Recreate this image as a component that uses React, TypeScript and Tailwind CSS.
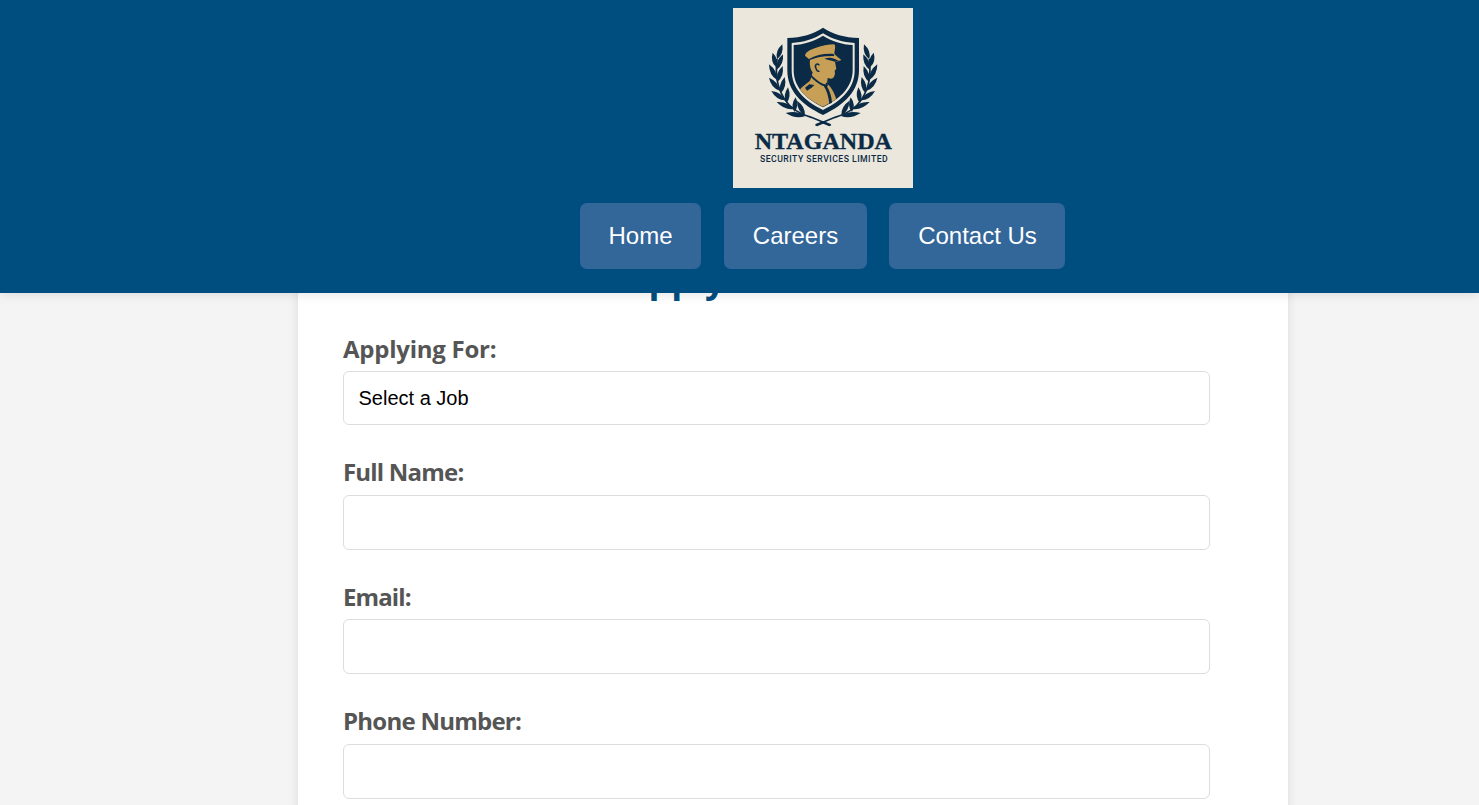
import React from 'react';

const NAVY = '#0a2a45';
const GOLD = '#c79f56';

type Leaf = [tipX: number, tipY: number, baseX: number, baseY: number];

const leaves: Leaf[] = [
  [163, 121, 147, 166],
  [134, 146, 145, 190],
  [165, 151, 146, 197],
  [123, 181, 147, 228],
  [164, 186, 148, 234],
  [123, 221, 155, 260],
  [170, 219, 158, 268],
  [130, 261, 172, 289],
  [180, 250, 175, 298],
  [146, 294, 198, 315],
  [203, 280, 199, 324],
  [173, 327, 232, 336],
  [207, 290, 231, 335],
];

function leafPath([tx, ty, bx, by]: Leaf): string {
  const dx = bx - tx;
  const dy = by - ty;
  const len = Math.hypot(dx, dy);
  const nx = (-dy / len) * 14.5;
  const ny = (dx / len) * 14.5;
  const mx = tx + dx * 0.55;
  const my = ty + dy * 0.55;
  return `M${tx} ${ty}Q${mx + nx} ${my + ny} ${bx} ${by}Q${mx - nx} ${my - ny} ${tx} ${ty}Z`;
}

function Branch() {
  return (
    <g>
      {leaves.map((leaf, i) => (
        <path key={i} d={leafPath(leaf)} fill={NAVY} />
      ))}
      <path
        d="M147 165C142 212 146 248 170 286C188 314 216 330 250 340L306 363"
        fill="none"
        stroke={NAVY}
        strokeWidth="5"
      />
      <path d="M286 351L308 360L310 364L304 367L282 358Z" fill={NAVY} />
    </g>
  );
}

function Logo() {
  return (
    <svg viewBox="15 12 540 540" className="block size-[180px] bg-[#ebe7dc]" role="img" aria-label="Ntaganda">
      <Branch />
      <g transform="translate(571 0) scale(-1 1)">
        <Branch />
      </g>
      <path
        d="M285 71C314 90 350 101 393 102V199C393 260 351 302 285 333C219 302 178 260 178 199V102C221 101 256 90 285 71Z"
        fill={NAVY}
      />
      <path
        d="M285 88C313 106 345 115 380 117V199C380 251 344 290 285 318C226 290 191 251 191 199V117C226 115 257 106 285 88Z"
        fill="#ebe7dc"
      />
      <path
        d="M285 95C312 112 341 121 374 123V199C374 247 340 283 285 310C230 283 197 247 197 199V123C229 121 258 112 285 95Z"
        fill={NAVY}
      />
      <path
        d="M231 155C233 145 243 139 260 133C281 125 301 121 319 121C324 128 320 137 319 150L328 158L340 168C333 172 325 174 321 174L325 194L320 200L321 209C319 218 317 223 309 224L299 222L297 239C312 250 320 270 325 286L285 308C255 294 231 276 216 257C224 244 243 236 247 228L254 205C247 197 244 181 246 168Z"
        fill={GOLD}
      />
      <path d="M243 165C263 153 291 148 317 150L319 156C291 155 264 159 244 169Z" fill={NAVY} />
      <path d="M289 164C303 159 317 161 328 169L338 172L320 173C309 169 299 167 289 164Z" fill={NAVY} />
      <path d="M274 184C267 174 259 184 264 193C266 201 270 203 274 201" fill="none" stroke={NAVY} strokeWidth="4.5" />
      <path
        d="M250 212C262 226 279 238 292 241C302 252 311 275 312 296L304 300C302 280 297 260 287 246C270 240 255 226 246 216Z"
        fill={NAVY}
      />
      <path d="M295 235L300 242L296 252L291 246Z" fill={NAVY} />
      <path d="M231 251L244 241L259 243L251 251L237 260Z" fill={NAVY} />
      <text
        x="80"
        y="435"
        textLength="412"
        lengthAdjust="spacingAndGlyphs"
        fill={NAVY}
        stroke={NAVY}
        strokeWidth="1"
        className="font-['Liberation_Serif',serif] text-[71px] font-bold"
      >
        NTAGANDA
      </text>
      <text
        x="96"
        y="474"
        textLength="383"
        fill={NAVY}
        className="font-[Roboto,sans-serif] text-[26px] font-medium"
      >
        SECURITY SERVICES LIMITED
      </text>
    </svg>
  );
}

const inputClass =
  "block w-[867px] appearance-none rounded-[6px] border border-[#dddddd] bg-white px-[14.5px] font-['Liberation_Sans',sans-serif] text-[20px] text-black outline-none";
const labelClass = 'block h-[36px] w-max text-[24px] leading-[36px] font-bold text-[#555555]';
const navClass = 'flex h-[66px] items-center justify-center rounded-[7px] bg-[#336699]';

export default function App() {
  return (
    <div className="flex h-[805px] flex-col overflow-hidden bg-[#f4f4f4] font-['Open_Sans',sans-serif]">
      <header className="relative z-10 flex h-[293px] shrink-0 flex-col items-center bg-[#004e80] pt-2 pl-[167px] shadow-[0_2px_10px_rgba(0,0,0,0.1)]">
        <Logo />
        <nav className="mt-[15px] mr-px flex font-['Liberation_Sans',sans-serif] text-[24px] text-white">
          <a href="#home" className={`${navClass} mr-[23px] w-[121px]`}>Home</a>
          <a href="#careers" className={`${navClass} mr-[22px] w-[143px]`}>Careers</a>
          <a href="#contact" className={`${navClass} w-[176px] pl-px`}>Contact Us</a>
        </nav>
      </header>
      <main className="-mt-[60px] ml-[298px] w-[990px] shrink-0 bg-white px-[45px] pb-10 shadow-[0_0_10px_rgba(0,0,0,0.1)]">
        <h1 className="flex h-[81px] items-start justify-center pt-[21px] pl-[12px] text-[36px] leading-[49px] font-bold text-[#004e80]">
          Apply for a Position
        </h1>
        <form>
          <div className="pt-[17px]">
            <label htmlFor="job" className={`${labelClass} tracking-[-0.25px]`}>Applying For:</label>
            <select id="job" className={`${inputClass} mt-[4px] h-[54px]`}>
              <option>Select a Job</option>
            </select>
          </div>
          <div className="pt-[29px]">
            <label htmlFor="name" className={`${labelClass} tracking-[-0.8px]`}>Full Name:</label>
            <input id="name" className={`${inputClass} mt-[5px] h-[55px]`} />
          </div>
          <div className="pt-[29px]">
            <label htmlFor="email" className={`${labelClass} tracking-[-0.9px]`}>Email:</label>
            <input id="email" className={`${inputClass} mt-[4px] h-[55px]`} />
          </div>
          <div className="pt-[29px]">
            <label htmlFor="phone" className={`${labelClass} tracking-[-0.75px]`}>Phone Number:</label>
            <input id="phone" className={`${inputClass} mt-[5px] h-[55px]`} />
          </div>
        </form>
      </main>
    </div>
  );
}
